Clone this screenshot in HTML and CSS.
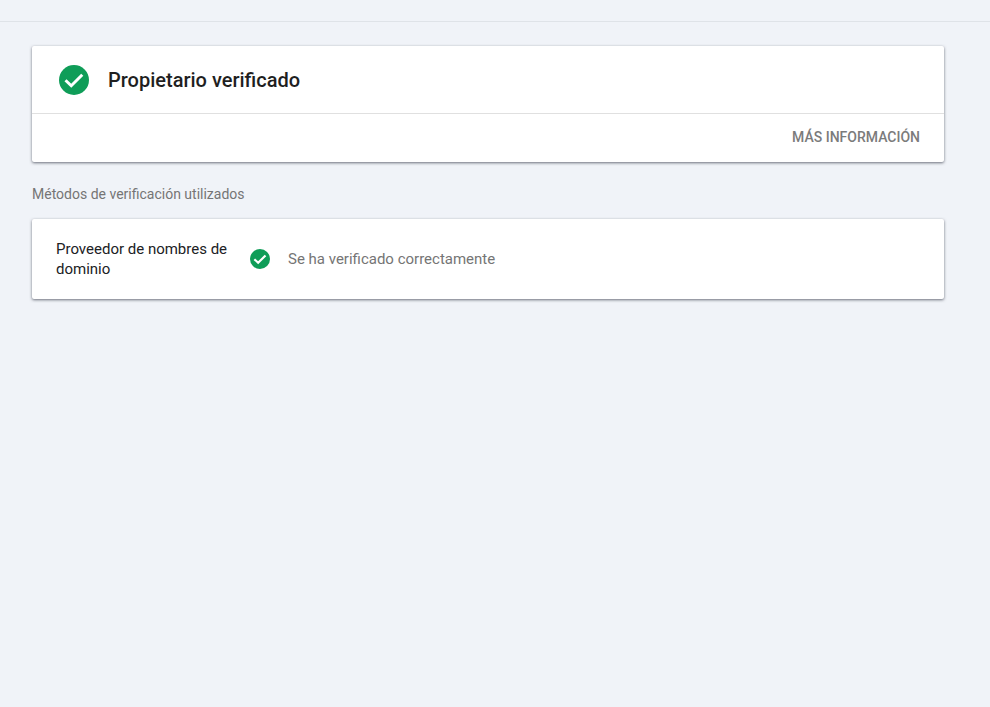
FILE: index.html
```html
<!DOCTYPE html>
<html lang="es">
<head>
    <meta charset="UTF-8">
    <meta name="viewport" content="width=device-width, initial-scale=1.0">
    <title>Propietario verificado</title>
    <link rel="stylesheet" href="styles.css">
</head>
<body>
    <header class="topbar"></header>
    <main class="content">
        <section class="card">
            <div class="card-head">
                <svg class="check check-large" viewBox="0 0 24 24">
                    <circle cx="12" cy="12" r="12" fill="#0f9d58"/>
                    <path d="M5.2 12.2l4.6 4.4 8.8-8.8" fill="none" stroke="#fff" stroke-width="2.4"/>
                </svg>
                <h1 class="card-title">Propietario verificado</h1>
            </div>
            <div class="card-foot">
                <a class="more-link">MÁS INFORMACIÓN</a>
            </div>
        </section>

        <h2 class="section-label">Métodos de verificación utilizados</h2>

        <section class="card method">
            <div class="method-name">Proveedor de nombres de dominio</div>
            <svg class="check check-small" viewBox="0 0 24 24">
                <circle cx="12" cy="12" r="12" fill="#0f9d58"/>
                <path d="M5.2 12.2l4.6 4.4 8.8-8.8" fill="none" stroke="#fff" stroke-width="2.6"/>
            </svg>
            <div class="method-status">Se ha verificado correctamente</div>
        </section>
    </main>
</body>
</html>
```

FILE: styles.css
```css
body {
    margin: 0;
    min-height: 707px;
    font-family: Roboto, Arial, sans-serif;
    background-color: #f0f3f8;
    color: #202124;
}
.topbar {
    height: 21px;
    border-bottom: 1px solid #dfe3e8;
}
.content {
    width: 912px;
    padding: 24px 0 0 32px;
}
.card {
    background-color: #fff;
    border-radius: 2px;
    box-shadow: 0 1px 3px rgba(50, 54, 70, 0.7);
}
.card-head {
    display: flex;
    align-items: center;
    height: 67px;
    padding-left: 27px;
    border-bottom: 1px solid #e0e0e0;
}
.check {
    flex-shrink: 0;
}
.check-large {
    width: 30px;
    height: 30px;
    margin-right: 19px;
}
.card-title {
    margin: 0;
    font-size: 20px;
    font-weight: 500;
    color: #1f1f1f;
}
.card-foot {
    display: flex;
    justify-content: flex-end;
    align-items: center;
    height: 46px;
    padding: 0 24px 2px 0;
}
.more-link {
    font-size: 14px;
    font-weight: 500;
    color: #7b7b7b;
}
.section-label {
    margin: 0;
    padding: 24px 0 16px;
    font-size: 14px;
    line-height: 17px;
    font-weight: 400;
    color: #757575;
}
.method {
    display: flex;
    align-items: center;
    height: 80px;
    padding-left: 24px;
}
.method-name {
    width: 176px;
    margin-right: 18px;
    font-size: 15px;
    line-height: 20px;
    color: #202124;
}
.check-small {
    width: 20px;
    height: 20px;
    margin-right: 18px;
}
.method-status {
    font-size: 15px;
    color: #757575;
}
```
